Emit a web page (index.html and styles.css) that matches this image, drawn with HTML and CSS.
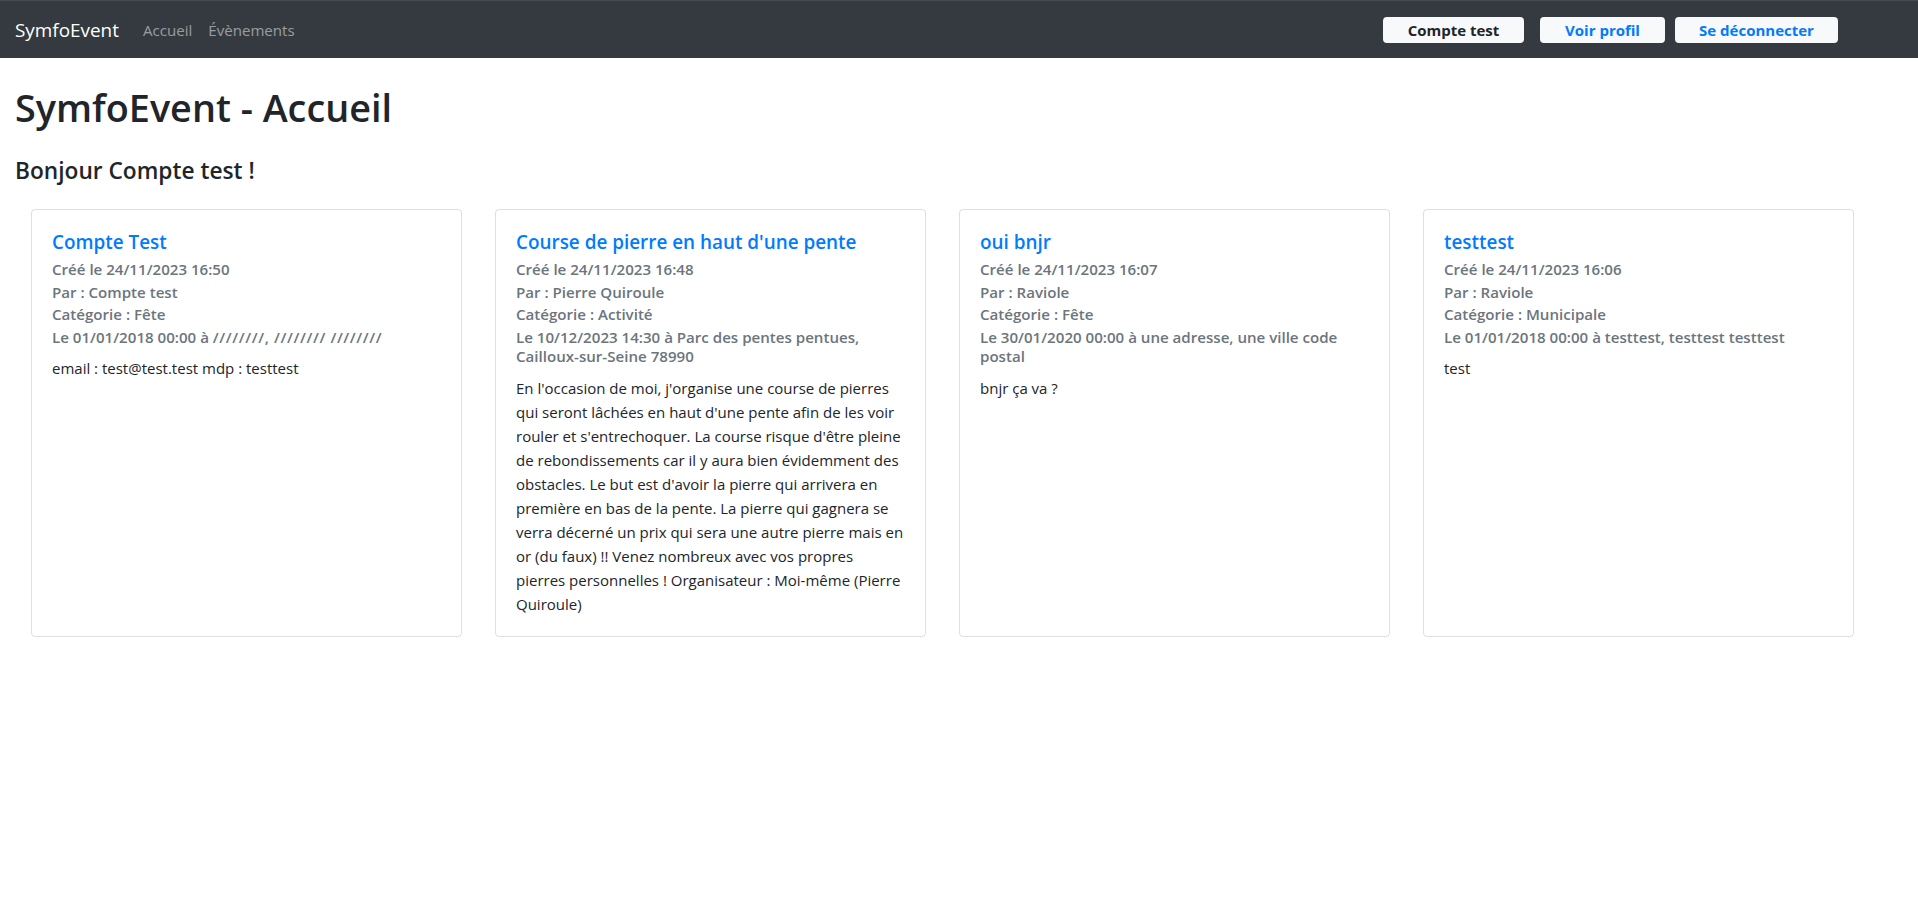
FILE: index.html
```html
<!DOCTYPE html>
<html lang="fr">
<head>
<meta charset="utf-8">
<title>SymfoEvent - Accueil</title>
<link rel="stylesheet" href="styles.css">
</head>
<body>
<nav class="navbar">
  <a class="brand" href="#">SymfoEvent</a>
  <ul class="nav-links">
    <li><a href="#">Accueil</a></li>
    <li><a href="#">Évènements</a></li>
  </ul>
  <div class="nav-actions">
    <span class="btn btn-user">Compte test</span>
    <a class="btn btn-link btn-profile" href="#">Voir profil</a>
    <a class="btn btn-link btn-logout" href="#">Se déconnecter</a>
  </div>
</nav>
<main class="container">
  <h1 class="page-title">SymfoEvent - Accueil</h1>
  <h4 class="greeting">Bonjour Compte test !</h4>
  <div class="cards">
    <div class="card">
      <h5 class="card-title">Compte Test</h5>
      <h6 class="card-subtitle">Créé le 24/11/2023 16:50</h6>
      <h6 class="card-subtitle">Par : Compte test</h6>
      <h6 class="card-subtitle">Catégorie : Fête</h6>
      <h6 class="card-subtitle last">Le 01/01/2018 00:00 à <span class="slashes">////////, //////// ////////</span></h6>
      <p class="card-text">email : test@test.test mdp : testtest</p>
    </div>
    <div class="card">
      <h5 class="card-title">Course de pierre en haut d'une pente</h5>
      <h6 class="card-subtitle">Créé le 24/11/2023 16:48</h6>
      <h6 class="card-subtitle">Par : Pierre Quiroule</h6>
      <h6 class="card-subtitle">Catégorie : Activité</h6>
      <h6 class="card-subtitle last">Le 10/12/2023 14:30 à Parc des pentes pentues, Cailloux-sur-Seine 78990</h6>
      <p class="card-text">En l'occasion de moi, j'organise une course de pierres qui seront lâchées en haut d'une pente afin de les voir rouler et s'entrechoquer. La course risque d'être pleine de rebondissements car il y aura bien évidemment des obstacles. Le but est d'avoir la pierre qui arrivera en première en bas de la pente. La pierre qui gagnera se verra décerné un prix qui sera une autre pierre mais en or (du faux) !! Venez nombreux avec vos propres pierres personnelles ! Organisateur : Moi-même (Pierre Quiroule)</p>
    </div>
    <div class="card">
      <h5 class="card-title">oui bnjr</h5>
      <h6 class="card-subtitle">Créé le 24/11/2023 16:07</h6>
      <h6 class="card-subtitle">Par : Raviole</h6>
      <h6 class="card-subtitle">Catégorie : Fête</h6>
      <h6 class="card-subtitle last">Le 30/01/2020 00:00 à une adresse, une ville code postal</h6>
      <p class="card-text">bnjr ça va ?</p>
    </div>
    <div class="card">
      <h5 class="card-title">testtest</h5>
      <h6 class="card-subtitle">Créé le 24/11/2023 16:06</h6>
      <h6 class="card-subtitle">Par : Raviole</h6>
      <h6 class="card-subtitle">Catégorie : Municipale</h6>
      <h6 class="card-subtitle last">Le 01/01/2018 00:00 à testtest, testtest testtest</h6>
      <p class="card-text">test</p>
    </div>
  </div>
</main>
</body>
</html>
```

FILE: styles.css
```css
* {
  box-sizing: border-box;
}

html, body {
  margin: 0;
  padding: 0;
}

body {
  font-family: "Open Sans", "Noto Sans", "Liberation Sans", sans-serif;
  font-size: 15px;
  line-height: 24px;
  color: #212529;
  background: #ffffff;
}

a {
  text-decoration: none;
}

/* Navbar */
.navbar {
  height: 58px;
  background: #343a40;
  border-top: 1px solid #464b51;
  display: flex;
  align-items: center;
  padding: 0 15px;
}

.brand {
  color: #ffffff;
  font-size: 18.9px;
  line-height: 30px;
  margin-right: 16px;
}

.nav-links {
  list-style: none;
  margin: 0;
  padding: 0;
  display: flex;
}

.nav-links a {
  display: block;
  padding: 0 8px;
  color: rgba(255, 255, 255, 0.5);
  font-size: 15.1px;
  line-height: 24px;
}

.nav-actions {
  margin-left: auto;
  margin-right: 65px;
  display: flex;
  align-items: center;
}

.btn {
  display: inline-block;
  height: 26px;
  line-height: 26px;
  padding: 0;
  background: #f8f9fa;
  border-radius: 4px;
  font-weight: 700;
  font-size: 15px;
  text-align: center;
  white-space: nowrap;
}

.btn-user {
  color: #212529;
  width: 141px;
  margin-right: 16px;
}

.btn-link {
  color: #007bff;
}

.btn-profile {
  width: 125px;
  margin-right: 10px;
}

.btn-logout {
  width: 163px;
}

/* Main */
.container {
  padding: 0 15px;
}

.page-title {
  margin: 26px 0 0 0;
  font-size: 37.8px;
  line-height: 48px;
  font-weight: 600;
  color: #212529;
}

.greeting {
  margin: 24px 0 0 0;
  font-size: 22.7px;
  line-height: 29px;
  font-weight: 600;
  color: #212529;
}

.cards {
  margin: 24px 0 0 16px;
  display: grid;
  grid-template-columns: repeat(4, 431px);
  column-gap: 33px;
}

.card {
  border: 1px solid rgba(0, 0, 0, 0.125);
  border-radius: 4px;
  padding: 20px;
  min-height: 427px;
}

.card-title {
  margin: 0 0 6px 0;
  font-size: 18.9px;
  line-height: 24px;
  font-weight: 600;
  color: #007bff;
}

.card-subtitle {
  margin: 0 0 3.5px 0;
  font-size: 15.1px;
  line-height: 19.2px;
  font-weight: 600;
  color: #6c757d;
}

.card-subtitle.last {
  margin-bottom: 9px;
}

.slashes {
  letter-spacing: 0.6px;
}

.card-text {
  margin: 0;
  font-size: 15px;
  line-height: 24px;
  color: #212529;
}
```
